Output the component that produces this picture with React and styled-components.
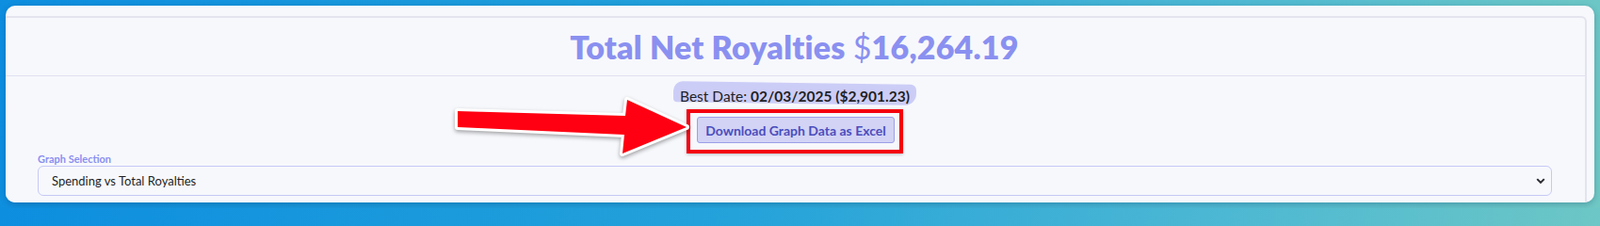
import styled, { createGlobalStyle } from "styled-components";

const GlobalStyle = createGlobalStyle`
  html, body {
    margin: 0;
    padding: 0;
    height: 221px;
    overflow: hidden;
  }
  body {
    background: linear-gradient(100deg, #0d8edf 0%, #24a2da 45%, #4db8d3 75%, #6fc8c4 100%);
    font-family: "Lato", "Open Sans", sans-serif;
  }
`;

const Stage = styled.div`
  padding: 6px;
  box-sizing: border-box;
  height: 221px;
`;

const Window = styled.div`
  height: 209px;
  background: #f7f8fc;
  border-radius: 10px;
  overflow: hidden;
  padding: 11px 8px 0 0;
  box-sizing: border-box;
  box-shadow: 0 2px 6px rgba(0, 40, 80, 0.25);
`;

const Card = styled.section`
  margin-left: -4px;
  height: 100%;
  border: 2px solid #e3e4ee;
  border-bottom: 0;
  border-radius: 6px 6px 0 0;
  background: #f7f8fc;
`;

const CardHeader = styled.header`
  height: 61px;
  display: flex;
  align-items: center;
  justify-content: center;
  border-bottom: 1px solid #e0e1f1;
`;

const Title = styled.h1`
  margin: 0;
  font-size: 34px;
  font-weight: 800;
  color: #8a90f0;
  letter-spacing: 0.2px;
`;

const Dollar = styled.span`
  font-weight: 400;
`;

const CardBody = styled.div`
  position: relative;
  padding: 6px 35px 0 36px;
  display: flex;
  flex-direction: column;
`;

const Centered = styled.div`
  display: flex;
  flex-direction: column;
  align-items: center;
`;

const BestDate = styled.p`
  position: relative;
  margin: 0;
  padding: 0 5px;
  height: 27px;
  line-height: 31px;
  font-size: 15.5px;
  color: #1f1f24;
  z-index: 0;

  &::before {
    content: "";
    position: absolute;
    left: -2px;
    right: -2px;
    top: 1px;
    height: 22px;
    background: rgba(196, 198, 246, 0.85);
    border-radius: 10px 6px 12px 4px;
    transform: skewY(0.8deg);
    z-index: -1;
  }

  strong {
    font-weight: 700;
  }
`;

const Callout = styled.div`
  margin-top: 2px;
  border: 4px solid #f4000e;
  padding: 4px 5px 7px 7px;
  box-shadow: 0 1px 3px rgba(0, 0, 0, 0.25);
  display: flex;
`;

const DownloadButton = styled.button`
  height: 28px;
  padding: 0 8px;
  border: 1px solid #9d9fe8;
  border-radius: 3px;
  background: #d2d3f5;
  color: #4b4dbd;
  font-family: inherit;
  font-size: 14px;
  font-weight: 700;
  cursor: pointer;
`;

const Arrow = styled.svg`
  position: absolute;
  left: 468px;
  top: 19px;
  filter: drop-shadow(0 2px 2px rgba(0, 0, 0, 0.35));
`;

const Field = styled.label`
  display: flex;
  flex-direction: column;
`;

const FieldLabel = styled.span`
  font-size: 11px;
  font-weight: 700;
  color: #8a8ff0;
  margin-bottom: 2px;
  line-height: 11px;
`;

const Select = styled.div`
  height: 32px;
  box-sizing: border-box;
  border: 1px solid #c6c9f6;
  border-radius: 6px;
  display: flex;
  align-items: center;
  justify-content: space-between;
  padding: 0 5px 0 14px;
  font-size: 13px;
  color: #1f1f24;
`;

function App() {
  return (
    <>
      <GlobalStyle />
      <Stage>
        <Window>
          <Card>
            <CardHeader>
              <Title>
                Total Net Royalties <Dollar>$</Dollar>16,264.19
              </Title>
            </CardHeader>
            <CardBody>
              <Centered>
                <BestDate>
                  Best Date: <strong>02/03/2025 ($2,901.23)</strong>
                </BestDate>
                <Callout>
                  <DownloadButton>Download Graph Data as Excel</DownloadButton>
                </Callout>
              </Centered>
              <Arrow width="265" height="72" viewBox="0 0 265 72">
                <polygon
                  points="14,18 192,23 194,6 257,35 189,63 191,43 14,35"
                  fill="#ff0012"
                  stroke="#ffffff"
                  strokeWidth="6"
                  strokeLinejoin="round"
                  paintOrder="stroke"
                />
              </Arrow>
              <Field>
                <FieldLabel>Graph Selection</FieldLabel>
                <Select>
                  <span>Spending vs Total Royalties</span>
                  <svg width="12" height="12" viewBox="0 0 16 16">
                    <path d="M3 5.5l5 5 5-5" fill="none" stroke="#2a2a30" strokeWidth="2.8" />
                  </svg>
                </Select>
              </Field>
            </CardBody>
          </Card>
        </Window>
      </Stage>
    </>
  );
}

export default App;
